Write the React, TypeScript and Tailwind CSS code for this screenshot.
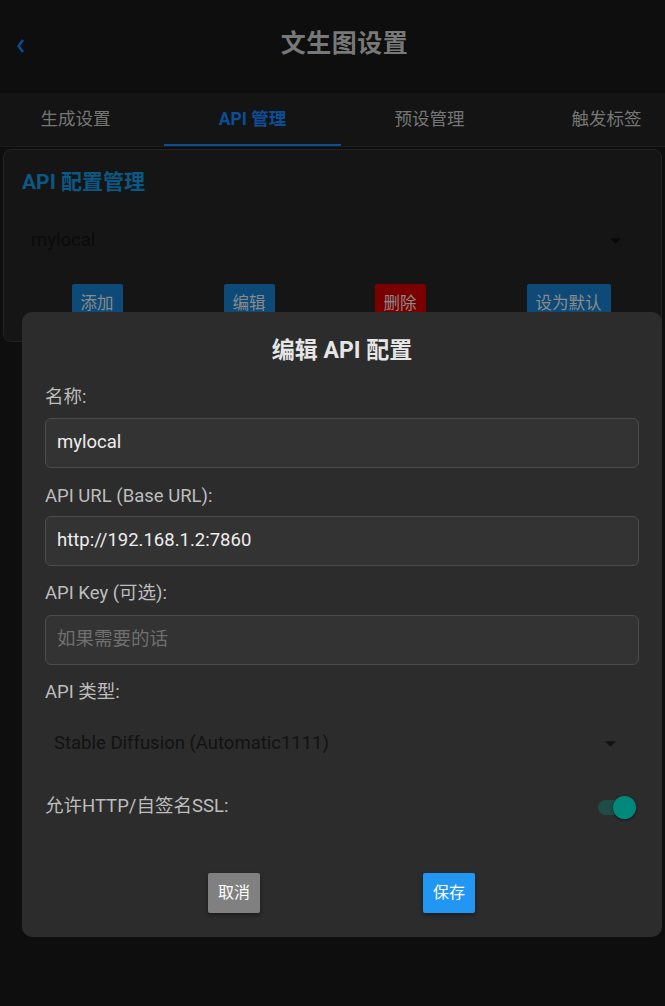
import React from "react";

const font = { fontFamily: 'Roboto, "Noto Sans CJK SC", sans-serif' };

function Caret({ className }: { className?: string }) {
  return (
    <svg width="11" height="6" viewBox="0 0 10 5" className={className}>
      <path d="M0 0 L10 0 L5 5 Z" fill="currentColor" />
    </svg>
  );
}

export default function App() {
  return (
    <div className="relative w-[665px] h-[1006px] overflow-hidden bg-[#0e0e0e]" style={font}>
      {/* Header */}
      <div className="relative h-[93px] flex items-center justify-center bg-[#0e0e0e]">
        <svg width="10" height="14" viewBox="0 0 10 14" className="absolute left-[16px] top-[39px] text-[#0a4c8e]">
          <path d="M7 1 L2.5 7 L7 13" fill="none" stroke="currentColor" strokeWidth="2.6" strokeLinejoin="round" />
        </svg>
        <div className="ml-[24px] text-[25px] font-bold text-[#787878] -mt-[5px] tracking-[0.5px]">文生图设置</div>
      </div>

      {/* Tabs */}
      <div className="h-[54px] bg-[#141414] flex border-b border-[#1c1c1c] overflow-hidden">
        <div className="flex -ml-[13px] shrink-0">
          {[
            { t: "生成设置", a: false },
            { t: "API 管理", a: true },
            { t: "预设管理", a: false },
            { t: "触发标签", a: false },
          ].map((tab) => (
            <div key={tab.t} className="relative w-[177px] shrink-0 flex items-center justify-center">
              <span className={"text-[17.5px] " + (tab.a ? "text-[#0a4f96] font-bold" : "text-[#767676]")}>{tab.t}</span>
              {tab.a && <div className="absolute left-0 right-0 bottom-[-1px] h-[3px] bg-[#0a4f96]" />}
            </div>
          ))}
        </div>
      </div>

      {/* Card */}
      <div className="mx-[3px] mt-[2px] h-[193px] rounded-[8px] border border-[#222] bg-[#151515] px-[18px] pt-[18px]">
        <div className="text-[21px] font-bold text-[#0a5883] leading-[28px]">API 配置管理</div>
        <div className="mt-[25px] h-[40px] flex items-center justify-between pl-[9px] pr-[22px]">
          <span className="text-[18.5px] text-[#0a0a0a]">mylocal</span>
          <Caret className="text-[#080808]" />
        </div>
        <div className="mt-[23px] flex">
          <div className="w-[152px] flex justify-center">
            <div className="-ml-[2px] h-[40px] px-[9px] rounded-[2px] bg-[#0e4a77] text-[#8a8a8a] text-[16.5px] flex items-center">添加</div>
          </div>
          <div className="w-[152px] flex justify-center">
            <div className="-ml-[2px] h-[40px] px-[9px] rounded-[2px] bg-[#0e4a77] text-[#8a8a8a] text-[16.5px] flex items-center">编辑</div>
          </div>
          <div className="w-[150px] flex justify-center">
            <div className="-ml-[2px] h-[40px] px-[9px] rounded-[2px] bg-[#7a0000] text-[#8a8a8a] text-[16.5px] flex items-center">删除</div>
          </div>
          <div className="flex-1 flex justify-center">
            <div className="ml-[18px] h-[40px] px-[9px] rounded-[2px] bg-[#0e4a77] text-[#8a8a8a] text-[16.5px] flex items-center">设为默认</div>
          </div>
        </div>
      </div>

      {/* Modal */}
      <div className="absolute left-[22px] top-[312px] w-[640px] h-[625px] rounded-[10px] bg-[#2c2c2c] px-[23px] pt-[25px]">
        <div className="text-center text-[23px] font-bold text-[#e6e6e6] leading-[28px]">编辑 API 配置</div>

        <div className="mt-[21px] text-[18.5px] text-[#bdbdbd] leading-[22px]">名称:</div>
        <div className="mt-[10px] h-[50px] rounded-[6px] border border-[#4c4c4c] bg-[#333333] flex items-center px-[11px]">
          <span className="text-[18.5px] text-[#ededed]">mylocal</span>
        </div>

        <div className="mt-[17px] text-[18.5px] text-[#bdbdbd] leading-[22px]">API URL (Base URL):</div>
        <div className="mt-[9px] h-[50px] rounded-[6px] border border-[#4c4c4c] bg-[#333333] flex items-center px-[11px]">
          <span className="text-[18.5px] text-[#ededed]">http://192.168.1.2:7860</span>
        </div>

        <div className="mt-[16px] text-[18.5px] text-[#bdbdbd] leading-[22px]">API Key (可选):</div>
        <div className="mt-[11px] h-[50px] rounded-[6px] border border-[#4c4c4c] bg-[#333333] flex items-center px-[11px]">
          <span className="text-[18.5px] text-[#6f6f6f]">如果需要的话</span>
        </div>

        <div className="mt-[16px] text-[18.5px] text-[#bdbdbd] leading-[22px]">API 类型:</div>
        <div className="mt-[27px] h-[28px] flex items-center justify-between pl-[9px] pr-[23px]">
          <span className="text-[18.5px] text-[#121212]">Stable Diffusion (Automatic1111)</span>
          <Caret className="text-[#121212]" />
        </div>

        <div className="mt-[36px] h-[24px] flex items-center justify-between">
          <span className="text-[18.5px] text-[#bdbdbd] leading-[22px]">允许HTTP/自签名SSL:</span>
          <div className="relative w-[40px] h-[24px] mr-[3px] mt-[4px]">
            <div className="absolute left-[2px] top-[4px] w-[30px] h-[15px] rounded-full bg-[#1e4d47]" />
            <div className="absolute right-[0px] top-[0px] w-[23px] h-[23px] rounded-full bg-[#00897b] shadow-[0_1px_3px_rgba(0,0,0,0.5)]" />
          </div>
        </div>

        <div className="mt-[55px] flex gap-[163px] pl-[163px]">
          <div className="h-[40px] px-[10px] rounded-[2px] bg-[#808080] text-white text-[16px] flex items-center shadow-[0_2px_4px_rgba(0,0,0,0.4)]">取消</div>
          <div className="h-[40px] px-[10px] rounded-[2px] bg-[#2196f3] text-white text-[16px] flex items-center shadow-[0_2px_4px_rgba(0,0,0,0.4)]">保存</div>
        </div>
      </div>
    </div>
  );
}
